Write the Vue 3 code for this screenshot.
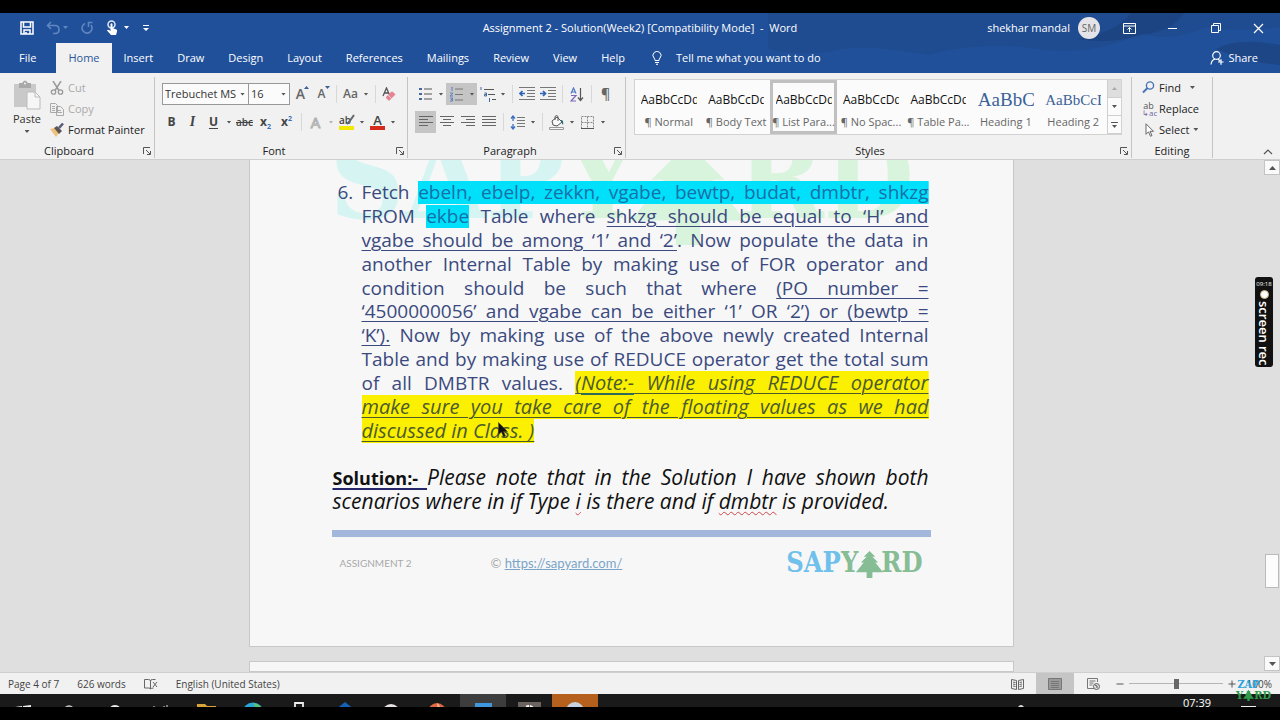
<template>
  <div class="screen">
    <header class="top">
      <svg class="clouds" viewBox="0 0 480 60" preserveAspectRatio="none" aria-hidden="true">
        <path d="M0 0H480V14Q440 20 410 14Q380 30 350 20Q300 46 240 34Q190 30 150 42Q90 30 60 38Q30 44 0 36Z" fill="#1d4480" opacity=".35" />
        <path d="M340 0h50q-10 18-40 22q-30 10-60 4q40-8 50-26zM420 36q20-12 60-4v20q-30-2-60-16z" fill="#1a3c74" opacity=".5" />
      </svg>
      <div class="titlebar">
        <div class="quick">
          <button class="qbtn" aria-label="Save">
            <svg width="14" height="14" viewBox="0 0 14 14"><path d="M1 1h12v12H1zM3.500 1v5h7V1M4 13V9h6v4M6 11v2" fill="none" stroke="#fff" stroke-width="1.500" /></svg>
          </button>
          <button class="qbtn faded" aria-label="Undo">
            <svg width="22" height="14" viewBox="0 0 22 14"><path d="M5 1L1.500 4.500L5 8M2 4.500h7q4 0 4 4t-4 4H7" fill="none" stroke="#9fbce6" stroke-width="1.600" /><path d="M17 5h5l-2.500 3z" fill="#9fbce6" /></svg>
          </button>
          <button class="qbtn faded" aria-label="Repeat">
            <svg width="14" height="14" viewBox="0 0 14 14"><path d="M5 2.500A5 5 0 1 0 11 4M12.500 1.500H8.500V6" fill="none" stroke="#9fbce6" stroke-width="1.600" /></svg>
          </button>
          <button class="qbtn" aria-label="Touch mode">
            <svg width="24" height="16" viewBox="0 0 24 16"><circle cx="5.500" cy="4.500" r="3.500" fill="none" stroke="#dfe9f8" stroke-width="1.500" /><path d="M4.500 4q1-1.500 2 0v4l4 1.500q1 .5.500 2L10 15H5L1 10.500q.5-1.500 3.500.5z" fill="#fff" /><path d="M18 6h5l-2.500 3z" fill="#fff" /></svg>
          </button>
          <button class="qbtn" aria-label="Customize toolbar">
            <svg width="8" height="8" viewBox="0 0 8 8"><path d="M1 1.500h6" stroke="#fff" /><path d="M1 4h6L4 7z" fill="#fff" /></svg>
          </button>
        </div>
        <h1>Assignment 2 - Solution(Week2) [Compatibility Mode]&nbsp; -&nbsp; Word</h1>
        <div class="window-tools">
          <span class="user">shekhar mandal</span>
          <span class="avatar">SM</span>
          <button class="wbtn" aria-label="Ribbon display options">
            <svg width="13" height="11" viewBox="0 0 13 11"><path d="M.5.500h12v10H.5zM.5 3h12M6.500 9V4.500M4.500 6.500l2-2 2 2" fill="none" stroke="#fff" /></svg>
          </button>
          <button class="wbtn" aria-label="Minimize">
            <svg width="11" height="11" viewBox="0 0 11 11"><path d="M1 5.500h9" stroke="#fff" /></svg>
          </button>
          <button class="wbtn" aria-label="Restore">
            <svg width="10" height="10" viewBox="0 0 10 10"><path d="M.5 2.500h7v7h-7zM2.500 2.500v-2h7v7h-2" fill="none" stroke="#fff" /></svg>
          </button>
          <button class="wbtn" aria-label="Close">
            <svg width="11" height="11" viewBox="0 0 11 11"><path d="M1 1l9 9M10 1l-9 9" stroke="#fff" stroke-width="1.200" /></svg>
          </button>
        </div>
      </div>
      <nav class="tabs">
        <button v-for="tab in tabs" :key="tab" class="tab" :class="{ active: tab === activeTab }" @click="activeTab = tab">{{ tab }}</button>
        <button class="tell">
          <svg width="10" height="14" viewBox="0 0 10 14"><path d="M3 9.500Q3 8 2 7A4 4 0 1 1 8 7Q7 8 7 9.500zM3 11.500h4M4 13.300h2" fill="none" stroke="#fff" /></svg>
          Tell me what you want to do
        </button>
        <button class="share">
          <svg width="14" height="14" viewBox="0 0 14 14"><circle cx="6.500" cy="4.500" r="3.800" fill="none" stroke="#fff" stroke-width="1.200" /><path d="M1 13.500Q1.500 9 5 8M8 8l2 2M8 11h5.500M11 8.300v5.500" fill="none" stroke="#fff" stroke-width="1.200" /></svg>
          Share
        </button>
      </nav>
    </header>

    <section class="ribbon">
      <div class="group clipboard">
        <div class="group-body clip-body">
          <button class="paste">
            <svg width="28" height="30" viewBox="0 0 28 30"><path d="M1 4h22v23H1z" fill="#c9c9c9" /><path d="M6 3h3q3-5 6 0h3v5H6z" fill="#a9a9a9" /><circle cx="12" cy="3.500" r="1" fill="#f1f1f1" /><path d="M14 12h8l5 5v12H14z" fill="#f6f6f6" stroke="#bbb" /><path d="M22 12v5h5" fill="none" stroke="#bbb" /></svg>
            Paste
            <i class="caret"></i>
          </button>
          <div class="clip-list">
            <button class="disabled">
              <svg width="14" height="14" viewBox="0 0 14 14"><path d="M3 0l6 9.500M11 0L5 9.500" stroke="#999" stroke-width="1.500" /><circle cx="3.500" cy="11" r="2.200" fill="none" stroke="#999" stroke-width="1.300" /><circle cx="10.500" cy="11" r="2.200" fill="none" stroke="#999" stroke-width="1.300" /></svg>
              Cut
            </button>
            <button class="disabled">
              <svg width="14" height="14" viewBox="0 0 14 14"><path d="M.5 1.500h5l2 2v7h-7zM6.500 4.500h4l3 3v6h-7zM2 4.500h3M2 6.500h3M2 8.500h3M8 8.500h3M8 10.500h4" fill="#f1f1f1" stroke="#a8a8a8" /></svg>
              Copy
            </button>
            <button>
              <svg width="14" height="14" viewBox="0 0 14 14"><path d="M0 6l5-1 4 5-3 4z" fill="#efc27c" /><path d="M4 5l3-2 5 5-3 3z" fill="#5b5452" /><path d="M9 5l4-4.500" stroke="#565b78" stroke-width="2.500" /></svg>
              Format Painter
            </button>
          </div>
        </div>
        <div class="group-label">Clipboard<button class="launch" aria-label="Clipboard settings"><svg width="8" height="8" viewBox="0 0 8 8"><path d="M.5 7V.500H7M3 3l4 4M7.500 4v3.500H4" fill="none" stroke="#555" /></svg></button></div>
      </div>

      <div class="group font">
        <div class="group-body">
          <div class="row">
            <span class="combo family"><select v-model="family" aria-label="Font"><option>Trebuchet MS</option><option>Arial</option></select><i class="caret"></i></span>
            <span class="combo size"><select v-model="size" aria-label="Font size"><option>16</option><option>18</option></select><i class="caret"></i></span>
            <button class="btn" aria-label="Grow font"><span class="glyph big">A</span><svg class="tip" width="5" height="3" viewBox="0 0 5 3"><path d="M0 3h5L2.500 0z" fill="#3b5f95" /></svg></button>
            <button class="btn" aria-label="Shrink font"><span class="glyph">A</span><svg class="tip" width="5" height="3" viewBox="0 0 5 3"><path d="M0 0h5L2.500 3z" fill="#3b5f95" /></svg></button>
            <i class="sep"></i>
            <button class="btn" aria-label="Change case"><span class="glyph">Aa</span></button>
            <button class="drop" aria-label="Case options"><i class="caret"></i></button>
            <i class="sep"></i>
            <button class="btn" aria-label="Clear formatting"><svg width="15" height="15" viewBox="0 0 15 15"><path d="M1 9L4.500 1 8 9M2.500 6h4" fill="none" stroke="#555" stroke-width="1.300" /><path d="M4 10l5-5q1-1 2 0l2.500 2.500L8 13q-1 1-2 0L4 11z" fill="#e58593" /><path d="M6 8l4 4" stroke="#f6c6cd" /></svg></button>
          </div>
          <div class="row">
            <button class="btn" aria-label="Bold"><b>B</b></button>
            <button class="btn" aria-label="Italic"><em class="ital">I</em></button>
            <button class="btn" aria-label="Underline"><b class="under">U</b></button>
            <button class="drop" aria-label="Underline options"><i class="caret"></i></button>
            <button class="btn" aria-label="Strikethrough"><s>abc</s></button>
            <button class="btn" aria-label="Subscript"><b>x<sub>2</sub></b></button>
            <button class="btn" aria-label="Superscript"><b>x<sup>2</sup></b></button>
            <i class="sep"></i>
            <button class="btn" aria-label="Text effects"><span class="outlined">A</span></button>
            <button class="drop pale" aria-label="Text effect options"><i class="caret"></i></button>
            <button class="btn" aria-label="Highlight"><span class="swatch mark">ab</span><svg class="pen" width="9" height="11" viewBox="0 0 9 11"><path d="M8 1L3 8l-2 2" stroke="#666" stroke-width="2" /></svg></button>
            <button class="drop" aria-label="Highlight colours"><i class="caret"></i></button>
            <button class="btn" aria-label="Font colour"><span class="swatch ink">A</span></button>
            <button class="drop" aria-label="Font colours"><i class="caret"></i></button>
          </div>
        </div>
        <div class="group-label">Font<button class="launch" aria-label="Font settings"><svg width="8" height="8" viewBox="0 0 8 8"><path d="M.5 7V.500H7M3 3l4 4M7.500 4v3.500H4" fill="none" stroke="#555" /></svg></button></div>
      </div>

      <div class="group paragraph">
        <div class="group-body">
          <div class="row">
            <button class="btn" aria-label="Bullets"><svg width="14" height="14" viewBox="0 0 14 14"><path d="M5 2h8M5 7h8M5 12h8" stroke="#555" /><path d="M0 1h3v2H0zM0 6h3v2H0zM0 11h3v2H0z" fill="#4468a4" /></svg></button>
            <button class="drop" aria-label="Bullet options"><i class="caret"></i></button>
            <button class="btn on" aria-label="Numbering"><svg width="14" height="15" viewBox="0 0 14 15"><path d="M5 2h8M5 7.500h8M5 13h8" stroke="#777" /><path d="M1 0h1v4M0 6h2.500v1L0 9h3M0 11h2.500v1.500H1M2.500 12.500V14H0" fill="none" stroke="#5f7fc0" /></svg></button>
            <button class="drop on" aria-label="Numbering options"><i class="caret"></i></button>
            <button class="btn" aria-label="Multilevel list"><svg width="16" height="15" viewBox="0 0 16 15"><path d="M4 2.500h10M8 7.500h7M12 12.500h4" stroke="#555" /><path d="M1 0v3M4.500 6h2v3h-2V7.500h2M9.500 11v4" fill="none" stroke="#4468a4" /></svg></button>
            <button class="drop" aria-label="Multilevel options"><i class="caret"></i></button>
            <i class="sep"></i>
            <button v-for="dir in ['M6 6.500H1M3.500 4L1 6.500L3.500 9', 'M0 6.500H5M3 4l2.500 2.500L3 9']" :key="dir" class="btn" aria-label="Indent"><svg width="16" height="14" viewBox="0 0 16 14"><path d="M0 .5h16M8 3.500h8M8 6.500h8M8 9.500h8M0 12.500h16" stroke="#777" /><path :d="dir" fill="none" stroke="#2f62b5" stroke-width="1.700" /></svg></button>
            <i class="sep"></i>
            <button class="btn" aria-label="Sort"><svg width="14" height="15" viewBox="0 0 14 15"><path d="M1 6.500L3.500 1 6 6.500M2 5h3" fill="none" stroke="#4a78c4" stroke-width="1.200" /><path d="M1 8.500h5l-5 5.500h5" fill="none" stroke="#7c69b5" stroke-width="1.200" /><path d="M10.500 1v12M8 10.500l2.500 3 2.500-3" fill="none" stroke="#555" stroke-width="1.200" /></svg></button>
            <i class="sep"></i>
            <button class="btn" aria-label="Show marks"><span class="glyph big">¶</span></button>
          </div>
          <div class="row">
            <button v-for="(strokes, name) in aligns" :key="name" class="btn" :class="{ on: align === name }" :aria-label="name" @click="align = name"><svg width="14" height="12" viewBox="0 0 14 12"><path :d="strokes" stroke="#666" /></svg></button>
            <i class="sep"></i>
            <button class="btn" aria-label="Line spacing"><svg width="15" height="15" viewBox="0 0 15 15"><path d="M7 2.500h8M7 5.500h8M7 8.500h8M7 11.500h8" stroke="#777" /><path d="M3 1v5M1 3.500L3 1l2 2.500M3 9v5M1 11.500L3 14l2-2.500" fill="none" stroke="#3d6fc0" stroke-width="1.300" /></svg></button>
            <button class="drop" aria-label="Spacing options"><i class="caret"></i></button>
            <i class="sep"></i>
            <button class="btn" aria-label="Shading"><svg width="16" height="15" viewBox="0 0 16 15"><path d="M3 6l5-4 5 5-5 4-4-1z" fill="#fafafa" stroke="#555" /><path d="M6 5V1.500q2-2 3 0V6" fill="none" stroke="#555" /><path d="M12 5q3 0 2 5l-2-3z" fill="#2a6d78" /><path d="M.5 12.500h14v2H.5z" fill="#f5f5f5" stroke="#999" /></svg></button>
            <button class="drop" aria-label="Shading colours"><i class="caret"></i></button>
            <button class="btn" aria-label="Borders"><svg width="13" height="13" viewBox="0 0 13 13"><path d="M.5.500h12v12H.5zM6.500.500v12M.5 6.500h12" fill="none" stroke="#888" stroke-dasharray="2 1" /><path d="M0 12.500h13" stroke="#555" /></svg></button>
            <button class="drop" aria-label="Border options"><i class="caret"></i></button>
          </div>
        </div>
        <div class="group-label">Paragraph<button class="launch" aria-label="Paragraph settings"><svg width="8" height="8" viewBox="0 0 8 8"><path d="M.5 7V.500H7M3 3l4 4M7.500 4v3.500H4" fill="none" stroke="#555" /></svg></button></div>
      </div>

      <div class="group styles">
        <div class="gallery">
          <button v-for="style in styles" :key="style.name" class="style" :class="{ chosen: style.name === chosen }" @click="chosen = style.name">
            <span class="sample" :class="style.kind">{{ style.sample }}</span>
            <span class="style-name">{{ style.name }}</span>
          </button>
          <div class="gallery-scroll">
            <button class="spent" aria-label="Previous styles"><svg width="5" height="3" viewBox="0 0 5 3"><path d="M0 3h5L2.500 0z" fill="#aaa" /></svg></button>
            <button aria-label="Next styles"><i class="caret"></i></button>
            <button aria-label="More styles"><svg width="7" height="6" viewBox="0 0 7 6"><path d="M0 .5h7" stroke="#555" /><path d="M1 3h5L3.500 6z" fill="#555" /></svg></button>
          </div>
        </div>
        <div class="group-label">Styles<button class="launch" aria-label="Style settings"><svg width="8" height="8" viewBox="0 0 8 8"><path d="M.5 7V.500H7M3 3l4 4M7.500 4v3.500H4" fill="none" stroke="#555" /></svg></button></div>
      </div>

      <div class="group editing">
        <div class="group-body clip-list">
          <button>
            <svg width="13" height="13" viewBox="0 0 13 13"><circle cx="8" cy="4.500" r="3.600" fill="none" stroke="#4874b4" stroke-width="1.400" /><path d="M5.500 7L1 11.500" stroke="#4874b4" stroke-width="2" /></svg>
            Find <i class="caret spaced"></i>
          </button>
          <button>
            <span class="swap"><span>ab</span><span>↳ac</span></span>
            Replace
          </button>
          <button>
            <svg width="13" height="14" viewBox="0 0 13 14"><path d="M4 .8v10.500l2.500-2.500 2 4.500 1.500-.8-2-4.200h3.500z" fill="#fff" stroke="#666" /></svg>
            Select<i class="caret"></i>
          </button>
        </div>
        <div class="group-label">Editing</div>
      </div>
      <button class="collapse" aria-label="Collapse ribbon"><svg width="10" height="6" viewBox="0 0 10 6"><path d="M1 5l4-4 4 4" fill="none" stroke="#555" stroke-width="1.200" /></svg></button>
    </section>

    <main class="workspace">
      <div class="canvas">
        <article class="page">
          <div class="brand watermark" aria-hidden="true">
            <span class="sky">SAP</span><span>Y</span>
            <svg viewBox="0 0 28 28"><path :d="tree" fill="currentColor" /></svg>
            <span>RD</span>
          </div>
          <div class="task">
            <span class="number">6.</span>
            <div class="copy">
              <p v-for="(line, i) in lines" :key="i" class="line" :class="{ tight: line.tight, last: line.last }">
                <span v-for="(run, j) in line.runs" :key="j" :class="run[1]">{{ run[0] }}</span>
              </p>
            </div>
          </div>
          <div class="solution">
            <p class="line"><b class="head">Solution:-&nbsp;</b><span>Please note that in the Solution I have shown both</span></p>
            <p class="line tight last">scenarios where in if Type <span class="typo">i</span> is there and if <span class="typo">dmbtr</span> is provided.</p>
          </div>
          <footer class="page-foot">
            <span class="foot-name">ASSIGNMENT 2</span>
            <span class="foot-link">© <a href="https://sapyard.com/">https://sapyard.com/</a></span>
            <div class="brand small">
              <span class="sky">SAP</span><span>Y</span>
              <svg viewBox="0 0 28 28"><path :d="tree" fill="currentColor" /></svg>
              <span>RD</span>
            </div>
          </footer>
          <svg class="pointer" width="10" height="16" viewBox="0 0 10 16" aria-hidden="true"><path d="M.5.500v12l3-2.500 2 5 2-1-2-4.500h4z" fill="#111" stroke="#443" stroke-width=".5" /></svg>
        </article>
        <div class="page next"></div>
      </div>
      <div class="scrollbar">
        <button aria-label="Scroll up"><svg width="7" height="4" viewBox="0 0 7 4"><path d="M0 4h7L3.500 0z" fill="#555" /></svg></button>
        <div class="track"><div class="thumb"></div></div>
        <button aria-label="Scroll down"><svg width="7" height="4" viewBox="0 0 7 4"><path d="M0 0h7L3.500 4z" fill="#555" /></svg></button>
      </div>
      <div class="recorder"><small>09:18</small><i class="dot"></i><span>screen rec</span></div>
    </main>

    <div class="status">
      <span>Page 4 of 7</span>
      <span>626 words</span>
      <svg width="14" height="12" viewBox="0 0 14 12"><path d="M.5 1.500h4q2 0 2 1.500v8q0-1-2-1h-4zM6.500 3q0-1.500 2-1.500h3M6.500 11q1-1 3-1M9 4l4 5M13 4L9 9" fill="none" stroke="#666" /></svg>
      <span>English (United States)</span>
      <div class="views">
        <button aria-label="Read mode"><svg width="13" height="12" viewBox="0 0 13 12"><path d="M.5 1.500l5 1v9l-5-1zM12.500 1.500l-5 1v9l5-1zM2 4l2.500.5M2 6l2.500.5M2 8l2.500.5M11 4l-2.500.5M11 6l-2.500.5M11 8l-2.500.5" fill="none" stroke="#666" /></svg></button>
        <button class="on" aria-label="Print layout"><svg width="14" height="12" viewBox="0 0 14 12"><path d="M.5.500h13v11H.5z" fill="#999" stroke="#777" /><path d="M3 3.500h8M3 5.500h8M3 7.500h8M3 9.500h8" stroke="#777" /></svg></button>
        <button aria-label="Web layout"><svg width="13" height="12" viewBox="0 0 13 12"><path d="M7 10.500H.5V.500h10V4M2.500 3h6M2.500 5h4M2.500 7h3" fill="none" stroke="#777" /><circle cx="9.500" cy="8.500" r="3" fill="#ddd" stroke="#666" /><path d="M8 7l2 1v2" stroke="#555" fill="none" /></svg></button>
      </div>
      <div class="zoom">
        <button aria-label="Zoom out"><svg width="8" height="8" viewBox="0 0 8 8"><path d="M.5 4h7" stroke="#555" /></svg></button>
        <input v-model="zoom" type="range" min="0" max="200" aria-label="Zoom">
        <button aria-label="Zoom in"><svg width="8" height="8" viewBox="0 0 8 8"><path d="M.5 4h7M4 .500v7" stroke="#555" /></svg></button>
        <span class="percent">{{ zoom }}%</span>
      </div>
    </div>

    <div class="taskbar">
      <span class="app"><svg width="16" height="18" viewBox="0 0 16 18"><path d="M0 3l7-1v7H0zM8 2l8-1v8H8zM0 10h7v7l-7-1zM8 10h8v8l-8-1z" fill="#eee" /></svg></span>
      <span class="app"><svg width="16" height="18" viewBox="0 0 16 18"><circle cx="8" cy="7" r="5" fill="none" stroke="#ccc" stroke-width="1.300" /></svg></span>
      <span class="app"><svg width="16" height="18" viewBox="0 0 16 18"><circle cx="8" cy="8" r="6" fill="none" stroke="#eee" stroke-width="1.800" /></svg></span>
      <span class="app"><svg width="16" height="18" viewBox="0 0 16 18"><path d="M1 2v4h10V2M14 1v3M14 6v8" fill="none" stroke="#ddd" /></svg></span>
      <span class="app"><svg width="20" height="18" viewBox="0 0 20 18"><path d="M0 0h8l2 2h9v14H0z" fill="#d9a53a" /><path d="M3 4h16v12H3z" fill="#f3d27a" /></svg></span>
      <span class="app wide"><svg width="22" height="22" viewBox="0 0 22 22"><circle cx="11" cy="11" r="10.500" fill="#2aa5d8" /><path d="M11 1q9 1 10 9l-7 2q1-5-3-11z" fill="#58c66a" /></svg></span>
      <span class="app wide"><svg width="18" height="20" viewBox="0 0 18 20"><path d="M5 6V1h8v5M1 6h16v12H1z" fill="none" stroke="#eee" stroke-width="1.800" /></svg></span>
      <span class="app wide"><svg width="20" height="20" viewBox="0 0 20 20"><path d="M10 0L20 8v12H0V8z" fill="#1263b3" /></svg></span>
      <span class="app"><svg width="18" height="18" viewBox="0 0 18 18"><circle cx="9" cy="9" r="9" fill="#e9e3e3" /><path d="M5 8q4-5 8-1" stroke="#b35" fill="none" /></svg></span>
      <span class="app wide"><svg width="20" height="20" viewBox="0 0 20 20"><circle cx="10" cy="10" r="9" fill="#dd6a42" /><path d="M10 1q5 3 1 9z" fill="#f3b49b" /></svg></span>
      <span class="app wide lit"><svg width="17" height="18" viewBox="0 0 17 18"><path d="M0 1h17v16H0z" fill="#3f98dd" /></svg></span>
      <span class="app wide"><svg width="23" height="20" viewBox="0 0 23 20"><path d="M0 0h23v20H0z" fill="#6b6460" /><circle cx="11" cy="9" r="5" fill="none" stroke="#fff" stroke-width="2" stroke-dasharray="3 1" /></svg></span>
      <span class="app wide orange"><svg width="20" height="20" viewBox="0 0 20 20"><circle cx="10" cy="9" r="9" fill="#c9d3df" /><circle cx="11" cy="10" r="5" fill="#4d5e76" /></svg></span>
      <div class="tray">
        <svg width="8" height="8" viewBox="0 0 8 8"><path d="M1 4q3-4 6 0v4H1z" fill="#ddd" /></svg>
        <time>07:39</time>
        <svg width="15" height="10" viewBox="0 0 15 10"><path d="M0 3h15v7H0z" fill="#eee" /></svg>
      </div>
    </div>

    <div class="corner-logo brand" aria-hidden="true">
      <div class="sky">ZAP</div>
      <div class="yard">Y<svg viewBox="0 0 28 28"><path :d="tree" fill="currentColor" /></svg>RD</div>
    </div>
  </div>
</template>

<script setup>
import { ref } from 'vue'

const tabs = ['File', 'Home', 'Insert', 'Draw', 'Design', 'Layout', 'References', 'Mailings', 'Review', 'View', 'Help']
const activeTab = ref('Home')
const family = ref('Trebuchet MS')
const size = ref('16')
const align = ref('left')
const chosen = ref('¶ List Para...')
const zoom = ref(100)

const aligns = {
  left: 'M0 .5h14M0 3.500h9M0 6.500h14M0 9.500h9',
  center: 'M0 .5h14M3 3.500h8M0 6.500h14M3 9.500h8',
  right: 'M0 .5h14M5 3.500h9M0 6.500h14M5 9.500h9',
  justify: 'M0 .5h14M0 3.500h14M0 6.500h14M0 9.500h14',
}

const styles = [
  { name: '¶ Normal', sample: 'AaBbCcDd' },
  { name: '¶ Body Text', sample: 'AaBbCcDd' },
  { name: '¶ List Para...', sample: 'AaBbCcDd' },
  { name: '¶ No Spac...', sample: 'AaBbCcDd' },
  { name: '¶ Table Pa...', sample: 'AaBbCcDd' },
  { name: 'Heading 1', sample: 'AaBbC', kind: 'h-one' },
  { name: 'Heading 2', sample: 'AaBbCcD', kind: 'h-two' },
]

// each line is a list of [text, class] runs
const lines = [
  { runs: [['Fetch '], ['ebeln, ebelp, zekkn, vgabe, bewtp, budat, dmbtr, shkzg', 'cyan']] },
  { runs: [['FROM '], ['ekbe', 'cyan'], [' Table where '], ['shkzg should be equal to ‘H’ and', 'u']] },
  { runs: [['vgabe should be among ‘1’ and ‘2’', 'u'], ['. Now populate the data in']] },
  { runs: [['another Internal Table by making use of FOR operator and']] },
  { runs: [['condition should be such that where '], ['(PO number =', 'u']] },
  { tight: true, runs: [['‘4500000056’ and vgabe can be either ‘1’ OR ‘2’) or (bewtp =', 'u']] },
  { runs: [['‘K’).', 'u'], [' Now by making use of the above newly created Internal']] },
  { runs: [['Table and by making use of REDUCE operator get the total sum']] },
  { tight: true, runs: [['of all DMBTR values. '], ['(', 'note'], ['Note:-', 'note heavy'], [' While using REDUCE operator', 'note']] },
  { tight: true, runs: [['make sure you take care of the floating values as we had', 'note']] },
  { tight: true, last: true, runs: [['discussed in Class. )', 'note']] },
]

const tree = 'M14 0l6 6h-3l6 6h-3l8 10h-11v6h-6v-6H0l8-10H5l6-6H8z'
</script>

<style>
body {
  background: #000;
}
</style>

<style scoped>
* {
  box-sizing: border-box;
}

.screen {
  position: relative;
  display: flex;
  flex-direction: column;
  height: 100vh;
  padding: 13px 0;
  overflow: hidden;
  background: #000;
  color: #333;
  font-family: "Open Sans", "Noto Sans", sans-serif;
  font-size: 11px;
  line-height: 16px;
}

h1, p {
  margin: 0;
  font-weight: inherit;
}

button {
  display: flex;
  align-items: center;
  justify-content: center;
  padding: 0;
  border: 0;
  background: none;
  color: inherit;
  font: inherit;
  white-space: nowrap;
}

svg {
  flex: none;
}

.caret {
  flex: none;
  width: 5px;
  height: 3px;
  background: #555;
  clip-path: polygon(0 0, 100% 0, 50% 100%);
}

/* title and tabs */
.top {
  position: relative;
  background: #21509a;
  color: #fff;
}

.clouds {
  position: absolute;
  top: 0;
  right: 0;
  width: 40%;
  height: 100%;
}

.titlebar {
  position: relative;
  display: grid;
  grid-template-columns: 1fr auto 1fr;
  align-items: center;
  height: 30px;
}

.titlebar h1 {
  font-size: 11px;
  line-height: 16px;
}

.quick {
  display: flex;
  align-items: center;
  gap: 12px;
  padding-left: 20px;
}

.faded {
  opacity: .5;
}

.window-tools {
  display: flex;
  align-items: center;
  justify-content: flex-end;
}

.avatar {
  width: 22px;
  margin: 0 8px;
  border-radius: 50%;
  background: #e4e4e8;
  color: #666;
  font-size: 10px;
  line-height: 22px;
  text-align: center;
}

.wbtn {
  width: 43px;
  height: 22px;
}

.tabs {
  position: relative;
  display: flex;
  height: 30px;
  padding: 0 22px 0 7px;
}

.tab {
  padding: 0 12px;
}

.tab:first-child {
  margin-right: 8px;
}

.tab.active {
  background: #f1f1f1;
  color: #2b569a;
}

.tell {
  gap: 14px;
  margin-left: 15px;
}

.share {
  gap: 4px;
  margin-left: auto;
}

/* ribbon */
.ribbon {
  position: relative;
  display: flex;
  height: 87px;
  padding: 4px 0 1px;
  border-bottom: 1px solid #cfcfcf;
  background: #f1f1f1;
}

.group {
  display: flex;
  flex: none;
  flex-direction: column;
  justify-content: space-between;
  border-right: 1px solid #c4c4c4;
}

.clipboard { width: 155px; }
.font { width: 253px; padding-left: 6px; }
.paragraph { width: 218px; padding-left: 7px; }
.styles { flex: 1; padding: 2px 9px 0 8px; }
.editing { width: 81px; }

.group-label {
  position: relative;
  height: 14px;
  color: #222;
  line-height: 14px;
  text-align: center;
}

.clipboard .group-label { padding-right: 16px; }
.font .group-label { margin-left: -20px; }
.paragraph .group-label { margin-left: -20px; }
.styles .group-label { padding-right: 16px; }

.launch {
  position: absolute;
  right: 3px;
  bottom: 3px;
}

.styles .launch {
  right: -6px;
}

.row {
  display: flex;
  align-items: center;
  height: 22px;
  margin-top: 6px;
}

.btn {
  position: relative;
  flex: none;
  width: 21px;
  height: 22px;
  color: #444;
}

.drop {
  flex: none;
  width: 10px;
  height: 22px;
}

.pale {
  opacity: .4;
}

.on {
  background: #c5c5c5;
}

.sep {
  flex: none;
  width: 8px;
  height: 18px;
  background: linear-gradient(#d8d8d8, #d8d8d8) center / 1px 100% no-repeat;
}

.glyph { font-size: 12px; font-weight: 600; color: #666; }
.big { font-size: 14px; }

.tip {
  position: absolute;
  top: 3px;
  right: 2px;
}

.btn b { font-size: 12px; }
.btn s { font-size: 10px; font-weight: 600; }
.btn sub, .btn sup { font-size: 7px; line-height: 0; color: #3b6fb5; }
.ital { font-family: "Liberation Serif", serif; font-size: 14px; font-weight: 700; }
.under { text-decoration: underline; text-underline-offset: 2px; }

.outlined {
  color: #f5f5f5;
  font-size: 15px;
  -webkit-text-stroke: 1px #b0b0b0;
}

.swatch {
  width: 15px;
  height: 15px;
  border-bottom: 4px solid #f3e800;
  font-size: 10px;
  font-weight: 600;
  line-height: 10px;
  text-align: left;
}

.pen {
  position: absolute;
  top: 3px;
  right: 2px;
}

.ink {
  border-color: #d62a1c;
  font-size: 13px;
  text-align: center;
}

.combo {
  position: relative;
  display: flex;
  align-items: center;
  height: 22px;
  border: 1px solid #999;
  background: #fbfbfb;
}

.combo .caret {
  position: absolute;
  right: 3px;
  pointer-events: none;
}

.family { width: 87px; margin-left: 1px; }
.size { width: 42px; margin-left: -1px; }

.combo select {
  width: 100%;
  padding: 0 2px;
  border: 0;
  outline: 0;
  appearance: none;
  background: none;
  color: #333;
  font: inherit;
}

.clip-body {
  display: flex;
}

.paste {
  flex-direction: column;
  justify-content: flex-start;
  width: 40px;
  margin: 3px 0 0 7px;
}

.paste svg { margin-bottom: 1px; }
.paste .caret { margin-top: 3px; }

.clip-list {
  display: flex;
  flex-direction: column;
}

.clip-list button {
  justify-content: flex-start;
  gap: 4px;
  height: 21px;
  margin-left: 3px;
  color: #222;
}

.clip-list .disabled {
  color: #aaa;
}

.editing .clip-list button {
  margin-left: 10px;
}

.caret.spaced {
  margin-left: 5px;
}

.swap {
  display: flex;
  flex-direction: column;
  width: 13px;
  color: #555;
  font-size: 9px;
  line-height: 7px;
}

.swap span + span {
  color: #7463a8;
  font-size: 8px;
}

.gallery {
  display: flex;
  height: 56px;
  border: 1px solid #d2d2d2;
  background: #fbfbfb;
}

.style {
  flex: 1 1 0;
  flex-direction: column;
  gap: 6px;
  min-width: 0;
  padding-top: 8px;
}

.chosen {
  box-shadow: inset 0 0 0 3px #c0c0c0;
}

.sample {
  display: flex;
  align-items: center;
  width: 56px;
  height: 16px;
  overflow: hidden;
  color: #111;
  font-size: 12px;
}

.h-one, .h-two {
  color: #3a6298;
  font-family: "Liberation Serif", serif;
  font-size: 19px;
}

.h-two {
  font-size: 15px;
}

.style-name {
  color: #666;
}

.gallery-scroll {
  display: flex;
  flex-direction: column;
  width: 14px;
}

.gallery-scroll button {
  flex: 1;
  border: 1px solid #cfcfcf;
  border-width: 0 0 1px 1px;
}

.gallery-scroll .spent {
  background: #dedede;
}

.collapse {
  width: 67px;
  align-items: flex-end;
  justify-content: flex-end;
  padding: 0 7px 3px 0;
}

/* document */
.workspace {
  position: relative;
  display: flex;
  flex: 1;
  min-height: 0;
  overflow: hidden;
  background: #dfdfdf;
}

.canvas {
  display: flex;
  flex: 1;
  flex-direction: column;
  align-items: center;
  min-width: 0;
  padding-right: 2px;
}

.page {
  position: relative;
  z-index: 0;
  width: 100%;
  max-width: 765px;
  padding: 20px 82px 68px;
  border: 1px solid #c8c8c8;
  border-top: 0;
  overflow: hidden;
  background: #f7f7f8;
}

.page.next {
  flex: 1;
  margin-top: 14px;
  padding: 0;
  border-top: 1px solid #c8c8c8;
}

.brand {
  display: flex;
  align-items: flex-end;
  color: #86bd94;
  font-family: "DejaVu Serif Condensed", "DejaVu Serif", serif;
  font-weight: 700;
}

.brand .sky {
  color: #6fc0ea;
}

.watermark {
  position: absolute;
  z-index: -1;
  top: -53px;
  left: 80px;
  align-items: center;
  color: #d8f4dc;
  font-size: 116px;
  line-height: 130px;
}

.watermark .sky { color: #d6f5f2; }
.watermark svg { width: 114px; height: 118px; margin: 22px -8px 0; }

.task {
  display: flex;
  padding: 0 2px 0 6px;
  color: #3b4a7e;
  font-size: 19px;
  font-weight: 500;
}

.number {
  width: 24px;
  line-height: 24px;
}

.copy {
  flex: 1;
}

.line {
  line-height: 24px;
  text-align: justify;
  text-align-last: justify;
  white-space: nowrap;
}

.tight { line-height: 23px; }
.last { text-align-last: left; }

.cyan {
  background: linear-gradient(#00e0fa, #00e0fa) center / 100% 23px no-repeat;
  color: #166fa8;
}

.u, .note {
  text-decoration: underline 1px;
  text-underline-offset: 3px;
}

.note {
  background: linear-gradient(#fbf000, #fbf000) center / 100% 24px no-repeat;
  color: #4c5a2c;
  font-size: 20px;
  font-style: italic;
}

.heavy {
  text-decoration: underline 2px #2f6a5a;
}

.solution {
  padding: 22px 2px 17px 1px;
  color: #111;
  font-size: 21px;
  font-style: italic;
  font-weight: 500;
}

.head {
  font-size: 18px;
  font-style: normal;
  text-decoration: underline 2px #25256a;
  text-underline-offset: 3px;
}

.typo {
  text-decoration: underline wavy 1px #d04848;
  text-underline-offset: 2px;
}

.page-foot {
  display: flex;
  align-items: center;
  padding: 11px 8px 0;
  border-top: 7px solid #a3b6dc;
  color: #a9a9a9;
  font-family: Lato, sans-serif;
}

.foot-name {
  width: 151px;
  font-size: 10px;
}

.foot-link {
  font-size: 13px;
}

.foot-link a {
  color: #7aa5c8;
}

.small {
  margin-left: auto;
  font-size: 27px;
  line-height: 30px;
}

.small svg {
  width: 27px;
  height: 27px;
  margin: 0 -2px;
}

.pointer {
  position: absolute;
  top: 262px;
  left: 248px;
}

.scrollbar {
  display: flex;
  flex-direction: column;
  width: 16px;
  padding-bottom: 1px;
}

.scrollbar button {
  height: 15px;
  border: 1px solid #c4c4c4;
  background: #fafafa;
}

.track {
  display: flex;
  flex: 1;
  flex-direction: column;
  justify-content: flex-end;
  padding-bottom: 68px;
}

.thumb {
  height: 34px;
  margin: 0 1px;
  border: 1px solid #bbb;
  background: #fcfcfc;
}

.recorder {
  position: absolute;
  top: 117px;
  right: 7px;
  display: flex;
  flex-direction: column;
  align-items: center;
  gap: 2px;
  width: 18px;
  height: 90px;
  padding-top: 4px;
  border-radius: 3px;
  background: #111;
  color: #fff;
  font-size: 13px;
  line-height: 18px;
}

.recorder small { font-size: 6px; line-height: 7px; }
.recorder span { font-weight: 600; writing-mode: vertical-rl; }

.dot {
  width: 9px;
  height: 9px;
  border: 1px solid #c9b37a;
  border-radius: 50%;
  background: #fff;
}

/* status bar */
.status {
  display: flex;
  align-items: center;
  gap: 18px;
  height: 22px;
  padding: 0 8px;
  border-top: 1px solid #cfcfcf;
  background: #f1f1f1;
  color: #444;
  font-size: 10px;
}

.views {
  display: flex;
  align-self: stretch;
  margin-left: auto;
}

.views button {
  width: 38px;
}

.zoom {
  display: flex;
  align-items: center;
  gap: 5px;
  margin-left: -14px;
}

.zoom input {
  width: 94px;
  height: 12px;
  margin: 0;
  appearance: none;
  background: linear-gradient(#b5b5b5, #b5b5b5) center / 100% 1px no-repeat;
}

.zoom input::-webkit-slider-thumb {
  width: 5px;
  height: 10px;
  appearance: none;
  background: #666;
}

.percent {
  width: 31px;
  text-align: right;
}

.taskbar {
  display: flex;
  height: 13px;
  overflow: hidden;
  background: #1a1a1a;
}

.app {
  display: flex;
  flex: none;
  justify-content: center;
  width: 46px;
  padding-top: 10px;
}

.wide { padding-top: 8px; }
.lit { background: #3d3d3d; }
.orange { background: #b5611d; }

.tray {
  display: flex;
  gap: 30px;
  margin-left: auto;
  padding-right: 24px;
  color: #fff;
  font-size: 11px;
  line-height: 18px;
}

.tray svg { margin-top: 9px; }
.tray svg:first-child { margin-right: 128px; }

.corner-logo {
  position: absolute;
  right: 9px;
  bottom: 19px;
  flex-direction: column;
  align-items: center;
  color: #2f9a49;
  font-size: 11px;
  line-height: 11px;
}

.corner-logo .sky {
  padding-right: 10px;
  color: #2ea2dc;
}

.yard {
  display: flex;
}

.yard svg {
  width: 11px;
  height: 11px;
}
</style>
